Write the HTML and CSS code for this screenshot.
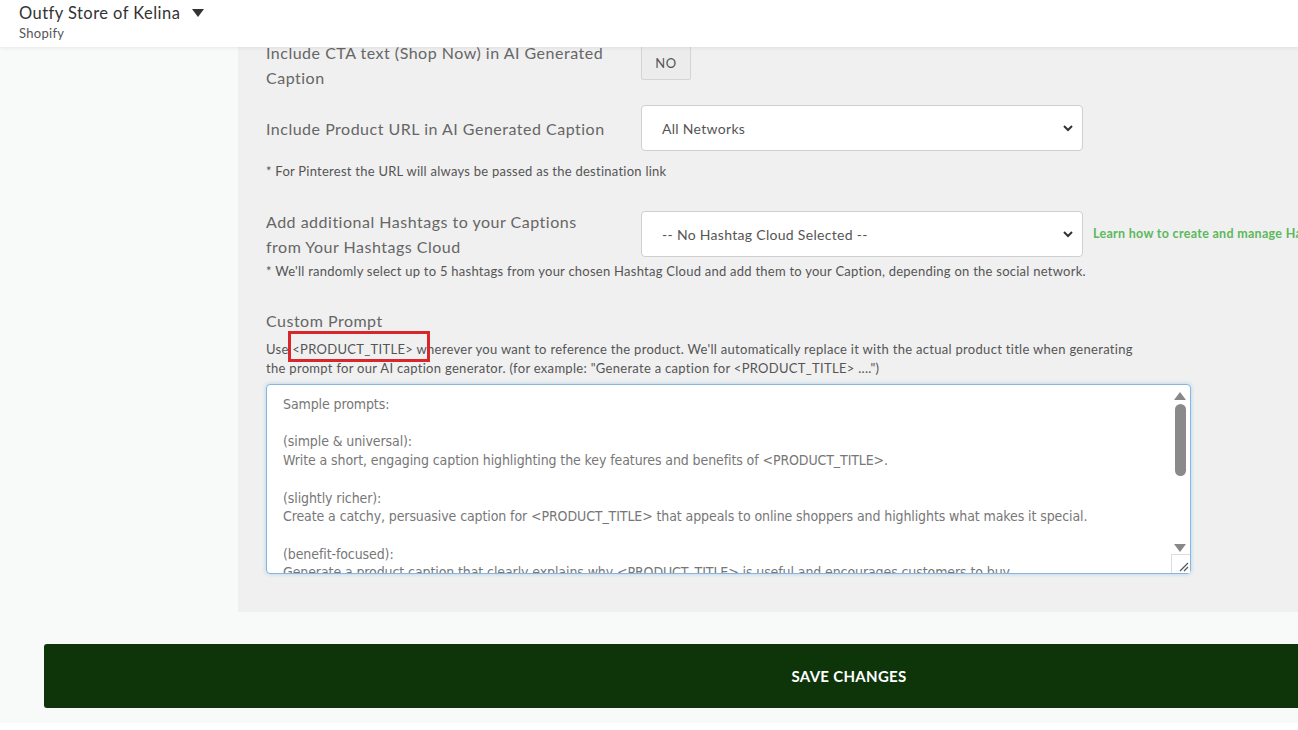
FILE: index.html
```html
<!DOCTYPE html>
<html lang="en">
<head>
    <meta charset="UTF-8">
    <meta name="viewport" content="width=device-width, initial-scale=1.0">
    <title>Outfy - AI Caption Settings</title>
    <link rel="stylesheet" href="styles.css">
</head>
<body>
    <header class="topbar">
        <div class="store">
            <div class="store-name">Outfy Store of Kelina <span class="caret"></span></div>
            <div class="store-platform">Shopify</div>
        </div>
    </header>

    <div class="page">
        <aside class="sidebar"></aside>
        <main class="panel">
            <div class="setting-row cta-row">
                <div class="setting-label">Include CTA text (Shop Now) in AI Generated Caption</div>
                <div class="setting-control">
                    <button type="button" class="toggle-btn">NO</button>
                </div>
            </div>

            <div class="setting-row url-row">
                <div class="setting-label">Include Product URL in AI Generated Caption</div>
                <div class="setting-control">
                    <select class="select">
                        <option>All Networks</option>
                    </select>
                </div>
            </div>
            <p class="note">* For Pinterest the URL will always be passed as the destination link</p>

            <div class="setting-row hashtag-row">
                <div class="setting-label">Add additional Hashtags to your Captions from Your Hashtags Cloud</div>
                <div class="setting-control">
                    <select class="select">
                        <option>-- No Hashtag Cloud Selected --</option>
                    </select>
                    <a class="help-link" href="#">Learn how to create and manage Hashtag Clouds</a>
                </div>
            </div>
            <p class="note note-tight">* We'll randomly select up to 5 hashtags from your chosen Hashtag Cloud and add them to your Caption, depending on the social network.</p>

            <div class="prompt-block">
                <div class="setting-label">Custom Prompt</div>
                <p class="prompt-help">Use <span class="highlight">&lt;PRODUCT_TITLE&gt;</span> wherever you want to reference the product. We'll automatically replace it with the actual product title when generating the prompt for our AI caption generator. (for example: "Generate a caption for &lt;PRODUCT_TITLE&gt; ....")</p>
                <div class="prompt-box">
                    <textarea class="prompt-input" placeholder="Sample prompts:

(simple &amp; universal):
Write a short, engaging caption highlighting the key features and benefits of &lt;PRODUCT_TITLE&gt;.

(slightly richer):
Create a catchy, persuasive caption for &lt;PRODUCT_TITLE&gt; that appeals to online shoppers and highlights what makes it special.

(benefit-focused):
Generate a product caption that clearly explains why &lt;PRODUCT_TITLE&gt; is useful and encourages customers to buy."></textarea>
                    <div class="fake-scroll">
                        <span class="arrow-up"></span>
                        <span class="thumb"></span>
                        <span class="arrow-down"></span>
                    </div>
                    <div class="grip"></div>
                </div>
            </div>
        </main>
    </div>

    <div class="actions">
        <button type="submit" class="save-btn">SAVE CHANGES</button>
    </div>
    <div class="footer-strip"></div>
</body>
</html>
```

FILE: styles.css
```css
html, body {
    margin: 0;
    padding: 0;
}
body {
    font-family: 'Lato', 'Noto Sans', sans-serif;
    background: #f8f9f9;
    color: #555;
    overflow: hidden;
    width: 1298px;
    height: 730px;
}
.topbar {
    position: relative;
    z-index: 2;
    height: 47px;
    background: #fff;
    box-shadow: 0 1px 4px rgba(0, 0, 0, 0.08);
    display: flex;
    align-items: center;
    padding-left: 19px;
}
.store {
    margin-top: -3px;
}
.store-name {
    font-size: 16.5px;
    letter-spacing: 0.45px;
    color: #333;
    line-height: 20px;
    display: flex;
    align-items: center;
}
.caret {
    display: inline-block;
    width: 0;
    height: 0;
    margin-left: 12px;
    border-left: 6px solid transparent;
    border-right: 6px solid transparent;
    border-top: 8px solid #333;
}
.store-platform {
    font-size: 13px;
    letter-spacing: 0.3px;
    color: #555;
    margin-top: 2px;
}
.page {
    display: flex;
    height: 565px;
}
.sidebar {
    width: 238px;
    flex-shrink: 0;
}
.panel {
    flex: 1;
    background: #f0f0f0;
    padding: 0 0 0 28px;
}
.setting-row {
    display: flex;
    align-items: flex-start;
}
.setting-label {
    width: 375px;
    font-size: 16px;
    line-height: 25px;
    color: #666;
    letter-spacing: 0.5px;
}
.setting-control {
    display: flex;
    align-items: center;
}
.cta-row {
    margin-top: -7px;
}
.cta-row .setting-label {
    width: 350px;
    margin-right: 25px;
}
.toggle-btn {
    font-family: inherit;
    width: 50px;
    height: 35px;
    margin-top: 5px;
    background: #ececec;
    border: 1px solid #d4d4d4;
    border-radius: 2px;
    color: #555;
    font-size: 13px;
    letter-spacing: 0.5px;
}
.url-row {
    margin-top: 15px;
    align-items: center;
}
.select {
    font-family: inherit;
    width: 442px;
    height: 46px;
    background: #fff;
    border: 1px solid #cfcfcf;
    border-radius: 4px;
    padding: 0 20px;
    font-size: 14px;
    letter-spacing: 0.3px;
    color: #555;
    appearance: none;
    background-image: url("data:image/svg+xml;utf8,<svg xmlns='http://www.w3.org/2000/svg' width='12' height='8' viewBox='0 0 12 8'><path d='M2 2l4 4 4-4' fill='none' stroke='%23333' stroke-width='2'/></svg>");
    background-repeat: no-repeat;
    background-position: right 8px center;
}
.note {
    margin: 12px 0 0;
    font-size: 13px;
    letter-spacing: 0.25px;
    color: #555;
    line-height: 16px;
}
.hashtag-row {
    margin-top: 30px;
    align-items: center;
}
.hashtag-row .setting-label {
    width: 330px;
    margin-right: 45px;
}
.help-link {
    margin-left: 10px;
    margin-top: -2px;
    font-size: 12.5px;
    letter-spacing: 0.3px;
    font-weight: bold;
    color: #5cb85c;
    text-decoration: none;
    white-space: nowrap;
}
.note-tight {
    margin-top: 4px;
}
.prompt-block {
    margin-top: 29px;
}
.prompt-help {
    margin: 7px 0 0;
    font-size: 13px;
    letter-spacing: 0.3px;
    line-height: 19px;
    color: #555;
    width: 875px;
}
.highlight {
    position: relative;
}
.highlight::after {
    content: "";
    position: absolute;
    left: -4px;
    right: -17px;
    top: -10px;
    bottom: -5px;
    border: 3px solid #d9262b;
}
.prompt-box {
    position: relative;
    width: 925px;
    height: 190px;
    margin-top: 6px;
}
.prompt-input {
    box-sizing: border-box;
    width: 100%;
    height: 100%;
    border: 1px solid #86b7e0;
    border-radius: 4px;
    box-shadow: 0 0 4px rgba(102, 175, 233, 0.45);
    padding: 10px 20px 0 16px;
    font-family: 'DejaVu Sans Condensed', 'DejaVu Sans', sans-serif;
    font-size: 14px;
    line-height: 18.7px;
    letter-spacing: -0.1px;
    resize: none;
    overflow: hidden;
    outline: none;
    background: #fff;
}
.prompt-input::placeholder {
    color: #777;
}
.fake-scroll {
    position: absolute;
    top: 2px;
    right: 3px;
    width: 16px;
    height: 166px;
    display: flex;
    flex-direction: column;
    align-items: center;
}
.arrow-up {
    margin-top: 6px;
    border-left: 6px solid transparent;
    border-right: 6px solid transparent;
    border-bottom: 8px solid #888;
}
.thumb {
    margin-top: 4px;
    width: 11px;
    height: 72px;
    border-radius: 6px;
    background: #8a8a8a;
}
.arrow-down {
    margin-top: auto;
    border-left: 6px solid transparent;
    border-right: 6px solid transparent;
    border-top: 8px solid #888;
}
.grip {
    position: absolute;
    right: 1px;
    bottom: 1px;
    width: 18px;
    height: 18px;
    border-left: 1px solid #ddd;
    border-top: 1px solid #ddd;
    background: #fff;
    background-image: url("data:image/svg+xml;utf8,<svg xmlns='http://www.w3.org/2000/svg' width='18' height='18'><path d='M8 16l8-8M12 16l4-4' stroke='%23555' stroke-width='1.2'/></svg>");
}
.actions {
    padding: 32px 0 0 44px;
}
.save-btn {
    width: 1610px;
    height: 64px;
    background: #0d3509;
    border: none;
    border-radius: 3px;
    color: #fff;
    font-family: inherit;
    font-size: 15px;
    font-weight: bold;
    letter-spacing: 0.3px;
}
.footer-strip {
    margin-top: 15px;
    height: 10px;
    background: #fff;
}
```
